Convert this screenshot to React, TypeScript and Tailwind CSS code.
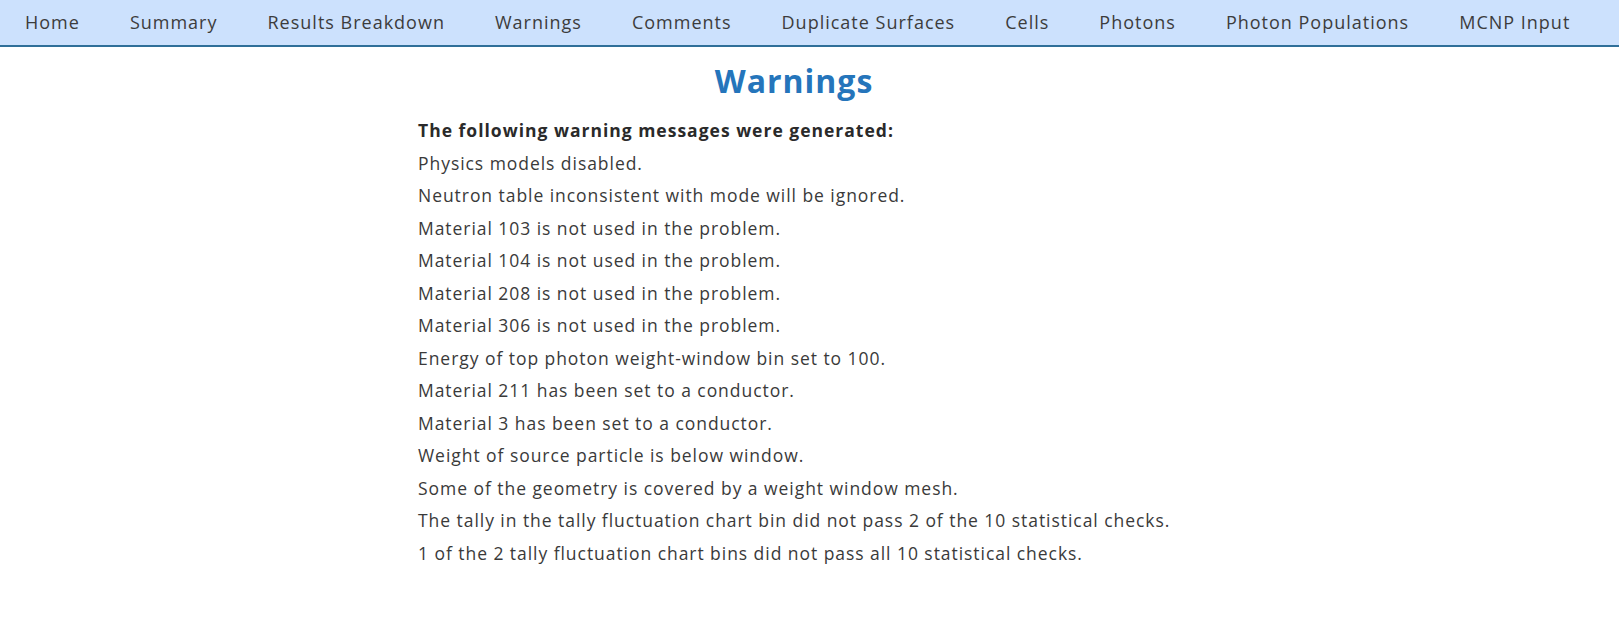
const navItems = [
  'Home',
  'Summary',
  'Results Breakdown',
  'Warnings',
  'Comments',
  'Duplicate Surfaces',
  'Cells',
  'Photons',
  'Photon Populations',
  'MCNP Input',
];

const warnings = [
  'Physics models disabled.',
  'Neutron table inconsistent with mode will be ignored.',
  'Material 103 is not used in the problem.',
  'Material 104 is not used in the problem.',
  'Material 208 is not used in the problem.',
  'Material 306 is not used in the problem.',
  'Energy of top photon weight-window bin set to 100.',
  'Material 211 has been set to a conductor.',
  'Material 3 has been set to a conductor.',
  'Weight of source particle is below window.',
  'Some of the geometry is covered by a weight window mesh.',
  'The tally in the tally fluctuation chart bin did not pass 2 of the 10 statistical checks.',
  '1 of the 2 tally fluctuation chart bins did not pass all 10 statistical checks.',
];

export default function App() {
  return (
    <div className="min-h-screen bg-white font-['Open_Sans',sans-serif] text-[#3a3a3a]">
      <nav className="flex h-[47px] items-center border-b-2 border-[#2f6f99] bg-[#cce1fd] text-[18px] tracking-[1px] text-[#3c3c3c]">
        {navItems.map((item) => (
          <a key={item} href="#" className="px-[25px] whitespace-nowrap">
            {item}
          </a>
        ))}
      </nav>

      <main className="ml-[418px] w-[752px] pt-[12px]">
        <h1 className="text-center text-[32px] font-bold leading-[44px] tracking-[1px] text-[#2575bb]">Warnings</h1>
        <div className="mt-[11px] whitespace-nowrap text-[17.5px] leading-[32.5px] tracking-[0.95px]">
          <div className="font-bold tracking-[1px] text-[#2a2a2a]">The following warning messages were generated:</div>
          {warnings.map((w) => (
            <div key={w}>{w}</div>
          ))}
        </div>
      </main>
    </div>
  );
}
